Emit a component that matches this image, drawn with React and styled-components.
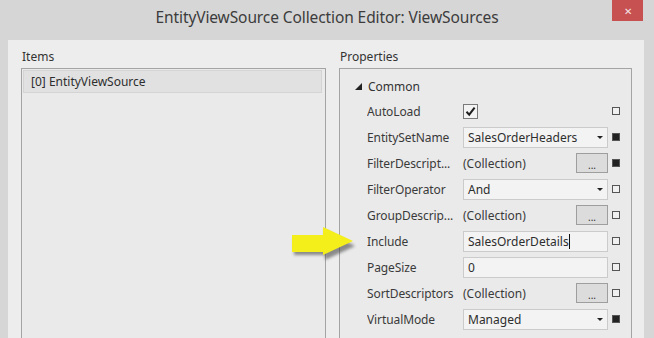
import styled, { createGlobalStyle } from "styled-components"

const GlobalStyle = createGlobalStyle`
  html, body { margin: 0; padding: 0; }
  body {
    background: #d7d7d7;
    overflow: hidden;
    font-family: "Noto Sans", "Open Sans", Arial, sans-serif;
  }
`

const props = [
  { name: "AutoLoad", kind: "check", set: false },
  { name: "EntitySetName", kind: "combo", value: "SalesOrderHeaders", set: true },
  { name: "FilterDescript...", kind: "collection", set: true },
  { name: "FilterOperator", kind: "combo", value: "And", set: false },
  { name: "GroupDescrip...", kind: "collection", set: false },
  { name: "Include", kind: "text", value: "SalesOrderDetails", caret: true, set: false },
  { name: "PageSize", kind: "text", value: "0", set: false },
  { name: "SortDescriptors", kind: "collection", set: false },
  { name: "VirtualMode", kind: "combo", value: "Managed", set: true },
]

const Editor = ({ p }) => {
  if (p.kind === "check") {
    return (
      <CheckBox>
        <svg width="13" height="13" viewBox="0 0 13 13">
          <path d="M2.5 6.8 L5.2 9.6 L10.6 2.6" fill="none" stroke="#1e1e1e" strokeWidth="2" />
        </svg>
      </CheckBox>
    )
  }
  if (p.kind === "collection") {
    return (
      <CollectionCell>
        <span>(Collection)</span>
        <EllipsisButton>...</EllipsisButton>
      </CollectionCell>
    )
  }
  return (
    <TextBox>
      <span>{p.value}</span>
      {p.caret && <Caret />}
      {p.kind === "combo" && <DropArrow />}
    </TextBox>
  )
}

const App = () => {
  return (
    <>
      <GlobalStyle />
      <Window>
        <TitleBar>
          <span />
          <Title>EntityViewSource Collection Editor: ViewSources</Title>
          <CloseButton>✕</CloseButton>
        </TitleBar>
        <Body>
          <Column>
            <GroupLabel>Items</GroupLabel>
            <ListBox>
              <ListItem $selected>[0] EntityViewSource</ListItem>
            </ListBox>
          </Column>
          <Column>
            <GroupLabel>Properties</GroupLabel>
            <PropertyGrid>
              <CategoryRow>
                <svg width="7" height="7" viewBox="0 0 7 7">
                  <polygon points="7,0 7,7 0,7" fill="#222" />
                </svg>
                <span>Common</span>
              </CategoryRow>
              {props.map(p => (
                <PropRow key={p.name}>
                  <PropName>{p.name}</PropName>
                  <Editor p={p} />
                  <Marker $set={p.set} />
                </PropRow>
              ))}
            </PropertyGrid>
          </Column>
          <Pointer width="70" height="42" viewBox="0 0 70 42">
            <defs>
              <filter id="sh" x="-20%" y="-20%" width="140%" height="160%">
                <feGaussianBlur stdDeviation="1.6" />
              </filter>
            </defs>
            <polygon
              points="6,16 37,16 37,8 67,24 37,38 37,33 6,33"
              fill="#3a3a3a"
              opacity="0.55"
              filter="url(#sh)"
            />
            <polygon points="4,13 35,13 35,5 65,19 35,33 35,30 4,30" fill="#f4ee1a" />
          </Pointer>
        </Body>
      </Window>
    </>
  )
}

export default App

const Window = styled.div`
  width: 654px;
  height: 338px;
  display: flex;
  flex-direction: column;
  background: #d6d6d6;
  overflow: hidden;
`

const TitleBar = styled.div`
  height: 40px;
  flex: none;
  display: grid;
  grid-template-columns: 1fr auto 1fr;
  align-items: start;
`

const Title = styled.div`
  padding-top: 6px;
  font-size: 15.5px;
  letter-spacing: -0.1px;
  color: #3c3c3c;
  white-space: nowrap;
`

const CloseButton = styled.div`
  justify-self: end;
  margin-right: 11px;
  width: 31px;
  height: 21px;
  background: #c75050;
  color: #f4e4e4;
  font-size: 10px;
  display: flex;
  align-items: center;
  justify-content: center;
`

const Body = styled.div`
  position: relative;
  flex: 1;
  margin: 0 10px 0 8px;
  padding: 8px 12px 0 13px;
  background: #ededed;
  display: grid;
  grid-template-columns: 305px 293px;
  column-gap: 13px;
  align-items: stretch;
`

const Column = styled.div`
  display: flex;
  flex-direction: column;
  min-height: 0;
`

const GroupLabel = styled.div`
  height: 20px;
  font-size: 12px;
  color: #333;
  padding-left: 1px;
  line-height: 17px;
`

const ListBox = styled.div`
  flex: 1;
  border: 1px solid #a4a4a4;
  border-bottom: none;
  background: #eaeaea;
  padding: 1px 3px 0 1px;
`

const ListItem = styled.div`
  height: 21px;
  line-height: 21px;
  padding-left: 7px;
  font-size: 12px;
  color: #2e2e2e;
  background: ${p => (p.$selected ? "#e1e1e1" : "transparent")};
  border: 1px solid ${p => (p.$selected ? "#d4d4d4" : "transparent")};
`

const PropertyGrid = styled.div`
  flex: 1;
  border: 1px solid #a4a4a4;
  border-bottom: none;
  background: #eaeaea;
  padding: 6px 12px 0 15px;
`

const CategoryRow = styled.div`
  height: 23px;
  display: flex;
  align-items: center;
  gap: 6px;
  font-size: 12px;
  color: #333;
`

const PropRow = styled.div`
  height: 26px;
  display: grid;
  grid-template-columns: 96px 145px 1fr;
  align-items: center;
  padding-left: 12px;
`

const PropName = styled.div`
  font-size: 12px;
  letter-spacing: -0.1px;
  color: #3a3a3a;
  white-space: nowrap;
  overflow: hidden;
`

const TextBox = styled.div`
  position: relative;
  height: 21px;
  box-sizing: border-box;
  border: 1px solid #cbcbcb;
  background: #f3f3f3;
  display: flex;
  align-items: center;
  padding-left: 4px;
  font-size: 12px;
  color: #2e2e2e;
`

const Caret = styled.span`
  width: 1px;
  height: 15px;
  background: #111;
`

const DropArrow = styled.span`
  position: absolute;
  right: 4px;
  top: 8px;
  border-left: 3px solid transparent;
  border-right: 3px solid transparent;
  border-top: 3px solid #222;
`

const CollectionCell = styled.div`
  display: flex;
  align-items: center;
  justify-content: space-between;
  font-size: 12px;
  color: #3a3a3a;
`

const EllipsisButton = styled.div`
  width: 32px;
  height: 20px;
  box-sizing: border-box;
  border: 1px solid #9e9e9e;
  background: #dcdcdc;
  display: flex;
  align-items: flex-end;
  justify-content: center;
  font-size: 10px;
  line-height: 14px;
  color: #333;
`

const CheckBox = styled.div`
  width: 15px;
  height: 15px;
  box-sizing: border-box;
  border: 1px solid #7a7a7a;
  background: #f3f3f3;
  display: flex;
  align-items: center;
  justify-content: center;
`

const Marker = styled.span`
  justify-self: start;
  margin-left: 4px;
  width: 8px;
  height: 8px;
  box-sizing: border-box;
  border: 1px solid #555;
  background: ${p => (p.$set ? "#222" : "#f0f0f0")};
`

const Pointer = styled.svg`
  position: absolute;
  left: 280px;
  top: 182px;
`
